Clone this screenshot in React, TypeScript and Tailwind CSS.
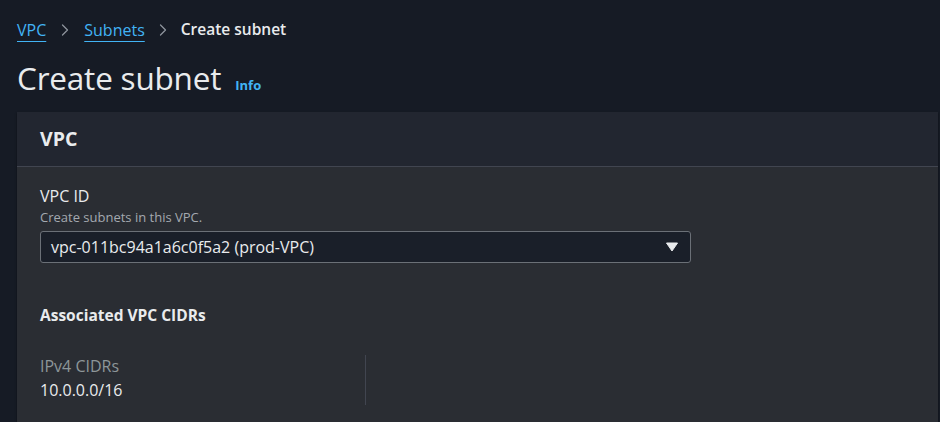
import { ChevronRight } from "lucide-react";

const App = () => {
	return (
		<div
			className="w-[940px] h-[422px] overflow-hidden bg-[#161b25] text-[#e9ebed]"
			style={{ fontFamily: '"Open Sans", "Noto Sans", sans-serif' }}
		>
			<div className="pl-[17px] pr-[2px]">
				{/* breadcrumbs */}
				<nav className="flex items-center h-[58px] pt-[1px] text-[16px]">
					<a className="text-[#42b4f5] underline underline-offset-[5px] decoration-1">VPC</a>
					<ChevronRight size={20} strokeWidth={1.5} className="ml-[9px] mr-[9px] text-[#8d949c]" />
					<a className="text-[#42b4f5] underline underline-offset-[5px] decoration-1">Subnets</a>
					<ChevronRight size={20} strokeWidth={1.5} className="mx-[8px] text-[#8d949c]" />
					<span className="font-semibold text-[15.5px]">Create subnet</span>
				</nav>
				<div className="flex items-baseline gap-[14px] h-[54px]">
					<h1 className="text-[31.5px] leading-[40px] tracking-[-0.2px]">Create subnet</h1>
					<span className="text-[13px] font-bold text-[#42b4f5]">Info</span>
				</div>

				{/* card */}
				<div className="bg-[#2a2d33] shadow-[0_1px_2px_rgba(0,0,0,0.5)]">
					<div className="h-[55px] bg-[#222630] border-b border-[#414550] flex items-center px-[23px]">
						<h2 className="text-[19.5px] font-bold">VPC</h2>
					</div>
					<div className="px-[23px] pt-[18px] pb-[40px]">
						<div className="text-[16px] leading-[22px]">VPC ID</div>
						<div className="text-[13px] leading-[18px] text-[#a4a9b0] mt-[1px]">Create subnets in this VPC.</div>
						<div className="mt-[5px] w-[651px] h-[32px] rounded-[3px] border border-[#6b7077] bg-[#1a1f29] flex items-center justify-between pl-[10px] pr-[12px]">
							<span className="text-[16px]">vpc-011bc94a1a6c0f5a2 (prod-VPC)</span>
							<svg width="12" height="10" viewBox="0 0 12 10">
								<path d="M0.5 1 L11.5 1 L6 9 Z" fill="#e9ebed" stroke="#e9ebed" strokeLinejoin="round" />
							</svg>
						</div>

						<h3 className="mt-[41px] text-[15.5px] font-bold leading-[22px]">Associated VPC CIDRs</h3>

						<div className="mt-[29px] flex">
							<div className="w-[326px] border-r border-[#414550] h-[50px]">
								<div className="text-[16px] leading-[22px] text-[#8d9699]">IPv4 CIDRs</div>
								<div className="text-[16px] leading-[22px] mt-[2px]">10.0.0.0/16</div>
							</div>
						</div>
					</div>
				</div>
			</div>
		</div>
	);
};

export default App;
